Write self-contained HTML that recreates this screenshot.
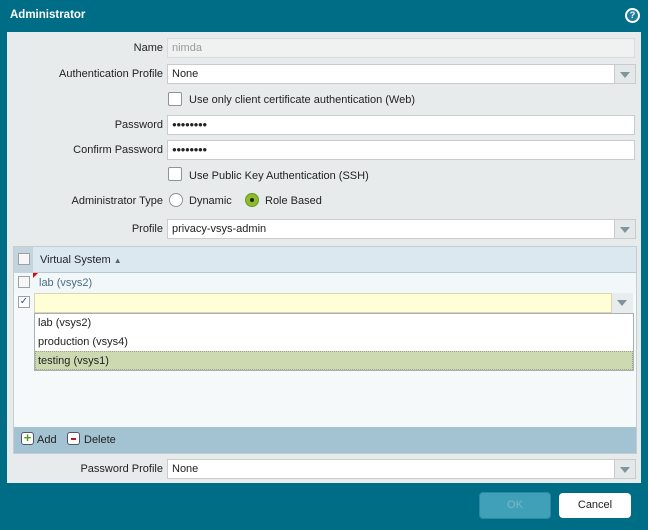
<!DOCTYPE html>
<html><head><style>
*{box-sizing:border-box;margin:0;padding:0}
body{width:648px;height:530px;background:#006d87;font-family:"Liberation Sans",sans-serif;font-size:11px;color:#222;position:relative;overflow:hidden}
.a{position:absolute}
.lbl{position:absolute;right:485px;text-align:right;white-space:nowrap}
.inp{position:absolute;left:167px;background:#fff;border:1px solid #c8cccc;padding:3px 4px;height:20px;line-height:12px}
.dd{position:absolute;width:21px;height:20px;background:#e4e8e9;border:1px solid #c8cccc;border-left:none}
.dd:after{content:"";position:absolute;left:5px;top:7px;border-left:5px solid transparent;border-right:5px solid transparent;border-top:6px solid #7f949c}
.cb{position:absolute;width:14px;height:14px;background:#fff;border:1px solid #8b9498;border-radius:2px}
.scb{position:absolute;width:12px;height:12px;background:#f6f6f6;border:1px solid #9aa0a3}
.pw{font-weight:bold;letter-spacing:-0.5px;font-size:8px;line-height:12px}
</style></head><body>
<div class="a" style="left:10px;top:9px;color:#fff;font-weight:bold;font-size:11.5px">Administrator</div>
<div class="a" style="left:625px;top:8px;width:15px;height:15px;border-radius:50%;background:#fff;"><div style="position:absolute;left:2px;top:2px;width:11px;height:11px;border-radius:50%;background:#1c7ea0;color:#fff;font-size:9px;font-weight:bold;text-align:center;line-height:11px">?</div></div>
<div class="a" style="left:7px;top:32px;width:634px;height:451px;background:#e8ebec"></div>

<div class="lbl" style="top:42px;">Name</div>
<div class="inp" style="top:38px;width:468px;background:#f0f2f2;color:#9a9a9a;border-color:#d8dcdc">nimda</div>
<div class="lbl" style="top:68px;">Authentication Profile</div>
<div class="inp" style="top:64px;width:448px">None</div><div class="dd" style="left:615px;top:64px"></div>
<div class="cb" style="left:168px;top:92px"></div><div class="a" style="left:189px;top:94px">Use only client certificate authentication (Web)</div>
<div class="lbl" style="top:119px;">Password</div>
<div class="inp pw" style="top:115px;width:468px">●●●●●●●●</div>
<div class="lbl" style="top:144px;">Confirm Password</div>
<div class="inp pw" style="top:140px;width:468px">●●●●●●●●</div>
<div class="cb" style="left:168px;top:167px"></div><div class="a" style="left:189px;top:170px">Use Public Key Authentication (SSH)</div>
<div class="lbl" style="top:195px;">Administrator Type</div>
<div class="a" style="left:169px;top:193px;width:14px;height:14px;border-radius:50%;background:#fff;border:1px solid #8b9498"></div>
<div class="a" style="left:189px;top:195px">Dynamic</div>
<div class="a" style="left:245px;top:193px;width:14px;height:14px;border-radius:50%;background:#8dbb2e;border:1px solid #6a9a1e"><div style="position:absolute;left:4px;top:4px;width:4px;height:4px;border-radius:50%;background:#222"></div></div>
<div class="a" style="left:265px;top:195px">Role Based</div>
<div class="lbl" style="top:223px;">Profile</div>
<div class="inp" style="top:219px;width:448px">privacy-vsys-admin</div><div class="dd" style="left:615px;top:219px"></div>

<div class="a" style="left:13px;top:246px;width:624px;height:208px;background:#f6f9fa;border:1px solid #c4cdd1"></div>
<div class="a" style="left:14px;top:247px;width:622px;height:26px;background:#dbe8ef;border-bottom:1px solid #b8c8d0"></div>
<div class="a" style="left:14px;top:247px;width:19px;height:26px;background:#c4d4dc"></div>
<div class="scb" style="left:18px;top:253px"></div>
<div class="a" style="left:40px;top:254px;color:#223">Virtual System <span style="font-size:8px;color:#4a6a7c">▲</span></div>
<div class="a" style="left:14px;top:273px;width:622px;height:20px;background:#f2f7f9"></div>
<div class="scb" style="left:18px;top:276px"></div>
<div class="a" style="left:33px;top:273px;width:0;height:0;border-top:5px solid #e00;border-right:5px solid transparent"></div>
<div class="a" style="left:39px;top:277px;color:#4a6e82">lab (vsys2)</div>
<div class="scb" style="left:18px;top:296px;background:#fff;color:#2a4fa0;font-size:10px;line-height:10px;text-align:center">✓</div>
<div class="a" style="left:34px;top:293px;width:578px;height:20px;background:#fffed4;border:1px solid #d7d7b0"></div>
<div class="dd" style="left:612px;top:293px;background:#e8ecec;border:none"></div>
<div class="a" style="left:34px;top:313px;width:600px;height:58px;background:#fff;border:1px solid #a8b0b4"></div>
<div class="a" style="left:38px;top:317px">lab (vsys2)</div>
<div class="a" style="left:38px;top:336px">production (vsys4)</div>
<div class="a" style="left:35px;top:351px;width:598px;height:19px;background:#cddab1;border:1px dotted #9aa884"></div>
<div class="a" style="left:38px;top:355px">testing (vsys1)</div>
<div class="a" style="left:14px;top:427px;width:622px;height:26px;background:#a3c3d2"></div>
<div class="a" style="left:21px;top:432px;width:13px;height:13px;border:1px solid #556;border-radius:3px;background:#fff;color:#5a9a1a;font-weight:bold;font-size:13px;line-height:10px;text-align:center">+</div>
<div class="a" style="left:37px;top:434px">Add</div>
<div class="a" style="left:67px;top:432px;width:13px;height:13px;border:1px solid #556;border-radius:3px;background:#fff"><div style="position:absolute;left:3px;top:5px;width:5px;height:2px;background:#c01818"></div></div>
<div class="a" style="left:84px;top:434px">Delete</div>

<div class="lbl" style="top:463px;">Password Profile</div>
<div class="inp" style="top:459px;width:448px">None</div><div class="dd" style="left:615px;top:459px"></div>

<div class="a" style="left:479px;top:492px;width:72px;height:27px;background:#3fa0b8;border:1px solid #2a8aa2;border-radius:4px;color:#7ab8c8;text-align:center;line-height:25px">OK</div>
<div class="a" style="left:559px;top:493px;width:72px;height:25px;background:#fff;border-radius:4px;text-align:center;line-height:25px;color:#222">Cancel</div>
</body></html>
